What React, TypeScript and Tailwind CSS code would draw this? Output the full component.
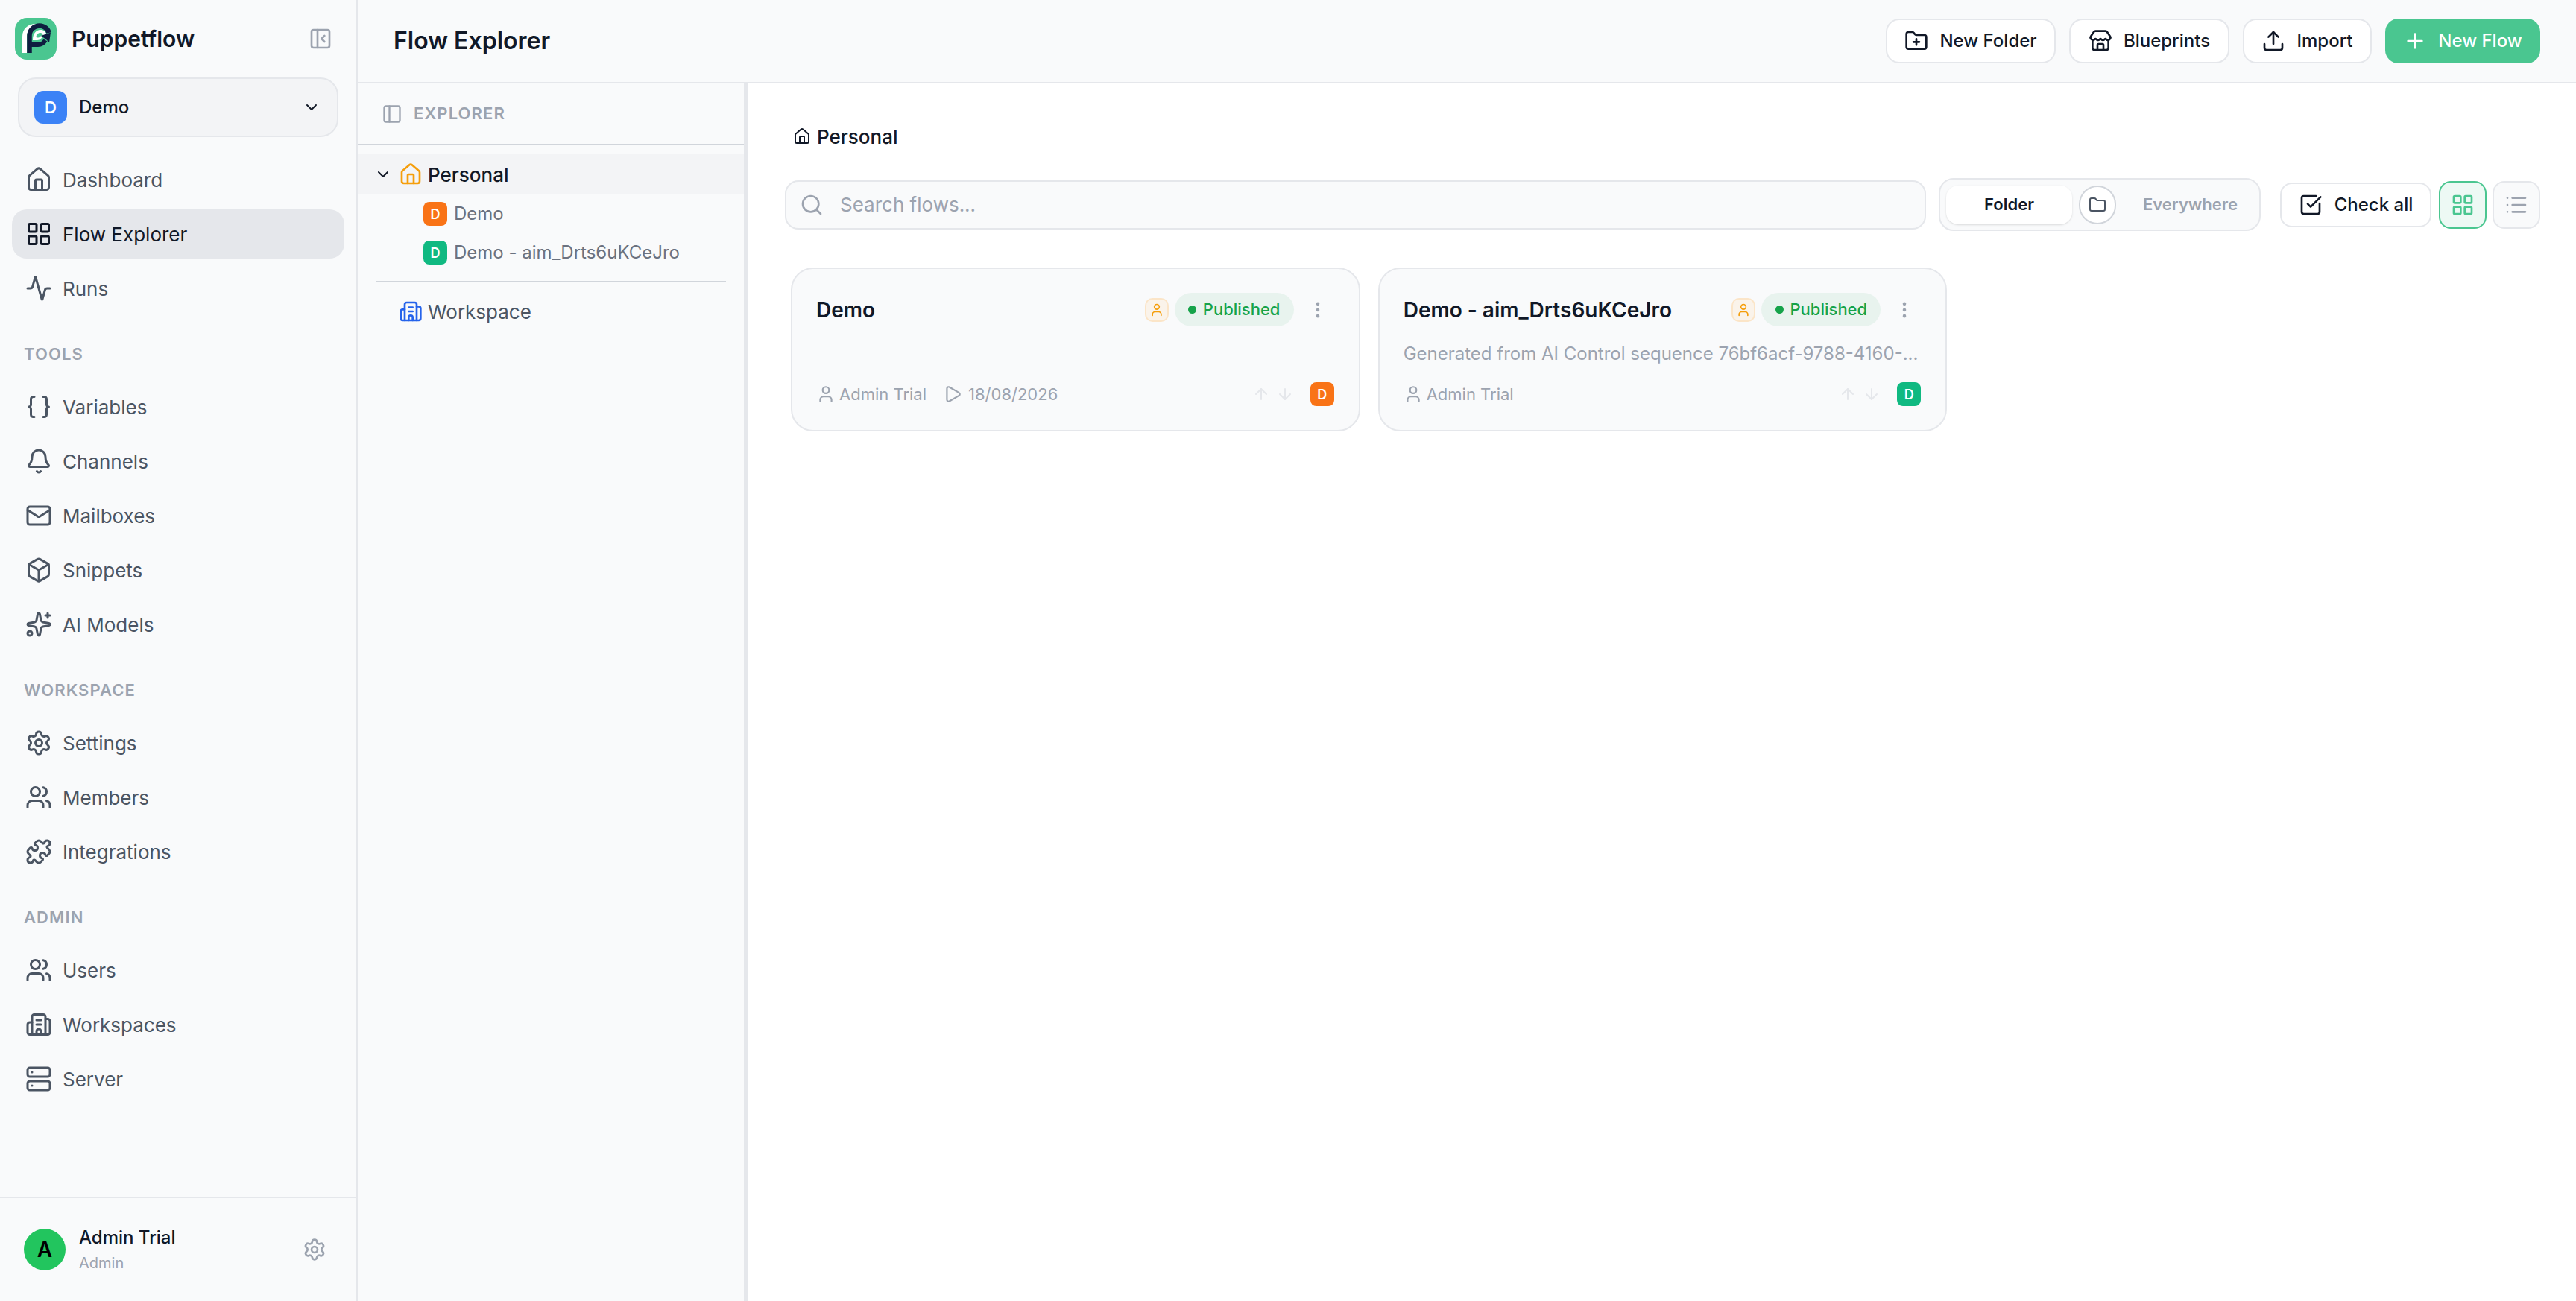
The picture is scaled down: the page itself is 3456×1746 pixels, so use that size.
import {
  Activity, ArrowDown, ArrowUp, Bell, Box, Braces, Building2, ChevronDown, EllipsisVertical, Folder, FolderPlus,
  House, LayoutGrid, List, Mail, PanelLeft, PanelLeftClose, Play, Plus, Puzzle, Search, Server, Settings,
  Sparkles, SquareCheckBig, Store, Upload, User, Users,
} from 'lucide-react';
import type { LucideIcon } from 'lucide-react';

function Logo() {
  return (
    <svg width="56" height="56" viewBox="0 0 56 56" fill="none">
      <rect width="56" height="56" rx="16" fill="#4ac690" />
      <path d="M10 47V25C10 14 18 8 28 8L30 9C22 11 16 16 16 26V47Z" fill="#fff" />
      <path d="M24 29C24 21 29 16 34 16C38 16 41 18 42 21L37 25C36 27 34 30 30 30H24Z" fill="#fff" />
      <path d="M28.500 26C28.500 22.500 31 20 34 20C36 20 37.500 21 38 22L34 25C33.500 26 32 26.500 30 26.500Z" fill="#4ac690" />
      <path d="M19.500 47V24C19.500 16 26 10.500 33 10.500C39.500 10.500 44.500 15 45.500 20" stroke="#0f1d40" strokeWidth="6.500" />
      <path d="M22 36H31C35.500 36 38.500 34 41 30" stroke="#0f1d40" strokeWidth="6" />
      <path d="M35 24L48 19.500L46 33L42 29Z" fill="#0f1d40" />
    </svg>
  );
}

function NavRow({ icon: Icon, label, active }: { icon: LucideIcon; label: string; active?: boolean }) {
  return (
    <div className={active
      ? 'flex h-[66px] items-center gap-[14px] rounded-[20px] bg-[#e5e7eb] pl-[18px] text-[26px] text-[#111827]'
      : 'flex h-[66px] items-center gap-[14px] rounded-[20px] pl-[18px] text-[26px] text-[#4b5563]'}>
      <Icon size={36} strokeWidth={2} />
      <span>{label}</span>
    </div>
  );
}

function NavSection({ title, items }: { title: string; items: { icon: LucideIcon; label: string }[] }) {
  return (
    <div className="mt-[39px]">
      <div className="mb-[22px] flex h-[32px] items-center pl-[16px] text-[22px] font-semibold tracking-[1.1px] text-[#9ca3af]">{title}</div>
      <div className="flex flex-col gap-[7px]">
        {items.map((i) => <NavRow key={i.label} icon={i.icon} label={i.label} />)}
      </div>
    </div>
  );
}

function Sidebar() {
  return (
    <aside className="flex h-full w-[480px] shrink-0 flex-col border-r-2 border-[#e5e7eb] bg-[#f9fafb]">
      <div className="flex h-[104px] items-center pl-[20px] pr-[32px]">
        <Logo />
        <span className="ml-[20px] text-[30px] font-semibold text-[#111827]">Puppetflow</span>
        <PanelLeftClose size={32} className="ml-auto text-[#9ca3af]" />
      </div>
      <div className="mx-[24px] flex h-[80px] w-[430px] items-center rounded-[24px] border-2 border-[#e5e7eb] bg-[#f3f4f6] pl-[20px] pr-[22px]">
        <div className="flex h-[44px] w-[44px] items-center justify-center rounded-[12px] bg-[#3b82f6] text-[22px] font-semibold text-white">D</div>
        <span className="ml-[16px] text-[24px] font-medium text-[#111827]">Demo</span>
        <ChevronDown size={24} className="ml-auto text-[#111827]" />
      </div>
      <div className="flex flex-1 flex-col px-4 pt-[24px]">
        <div className="flex flex-col gap-[7px]">
          <NavRow icon={House} label="Dashboard" />
          <NavRow icon={LayoutGrid} label="Flow Explorer" active />
          <NavRow icon={Activity} label="Runs" />
        </div>
        <NavSection title="TOOLS" items={[
          { icon: Braces, label: 'Variables' },
          { icon: Bell, label: 'Channels' },
          { icon: Mail, label: 'Mailboxes' },
          { icon: Box, label: 'Snippets' },
          { icon: Sparkles, label: 'AI Models' },
        ]} />
        <NavSection title="WORKSPACE" items={[
          { icon: Settings, label: 'Settings' },
          { icon: Users, label: 'Members' },
          { icon: Puzzle, label: 'Integrations' },
        ]} />
        <NavSection title="ADMIN" items={[
          { icon: Users, label: 'Users' },
          { icon: Building2, label: 'Workspaces' },
          { icon: Server, label: 'Server' },
        ]} />
      </div>
      <div className="flex h-[140px] items-center border-t-2 border-[#e5e7eb] pl-[32px] pr-[40px]">
        <div className="flex h-[56px] w-[56px] items-center justify-center rounded-full bg-[#22c55e] text-[28px] font-semibold text-black">A</div>
        <div className="ml-[18px] flex flex-col">
          <span className="text-[24px] leading-[36px] font-medium text-[#111827]">Admin Trial</span>
          <span className="text-[20px] leading-[32px] text-[#9ca3af]">Admin</span>
        </div>
        <Settings size={32} className="ml-auto text-[#9ca3af]" />
      </div>
    </aside>
  );
}

function HeaderButton({ icon: Icon, label, className }: { icon: LucideIcon; label: string; className: string }) {
  return (
    <button className={`flex h-[60px] items-center justify-center gap-[15px] rounded-[18px] border-2 border-[#e5e7eb] bg-white text-[24px] font-medium text-[#111827] ${className}`}>
      <Icon size={32} />
      {label}
    </button>
  );
}

function ExplorerPanel() {
  return (
    <div className="flex h-full w-[524px] shrink-0 flex-col border-r-[6px] border-[#e5e7eb] bg-[#f9fafb]">
      <div className="flex h-[83px] items-center gap-[15px] border-b-2 border-[#d1d5db] pl-[32px] text-[22px] font-semibold tracking-[1.1px] text-[#9ca3af]">
        <PanelLeft size={28} />
        EXPLORER
      </div>
      <div className="mt-[12px] flex h-[54px] items-center bg-[#f3f4f6] pl-[22px] text-[26px] font-medium text-[#111827]">
        <ChevronDown size={24} />
        <House size={32} className="ml-[9px] text-[#f59e0b]" />
        <span className="ml-[7px]">Personal</span>
      </div>
      <div className="mt-[10px] flex h-[32px] items-center pl-[88px] text-[24px] text-[#6b7280]">
        <div className="flex h-[32px] w-[32px] items-center justify-center rounded-[8px] bg-[#f97316] text-[18px] font-semibold text-white">D</div>
        <span className="ml-[9px]">Demo</span>
      </div>
      <div className="mt-[20px] flex h-[32px] items-center pl-[88px] text-[24px] text-[#6b7280]">
        <div className="flex h-[32px] w-[32px] items-center justify-center rounded-[8px] bg-[#10b981] text-[18px] font-semibold text-white">D</div>
        <span className="ml-[9px]">Demo - aim_Drts6uKCeJro</span>
      </div>
      <div className="mx-[24px] mt-[22px] h-[2px] bg-[#d1d5db]" />
      <div className="mt-[21px] flex h-[36px] items-center pl-[55px] text-[26px] text-[#4b5563]">
        <Building2 size={32} className="text-[#2563eb]" />
        <span className="ml-[7px]">Workspace</span>
      </div>
    </div>
  );
}

function FlowCard({ title, desc, date, tile }: { title: string; desc?: string; date?: string; tile: string }) {
  return (
    <div className="flex h-[220px] flex-col rounded-[30px] border-2 border-[#e5e7eb] bg-[#f9fafb] pl-[32px] pr-[33px]">
      <div className="mt-[32px] flex h-[45px] items-center">
        <span className="text-[28px] font-semibold text-[#111827]">{title}</span>
        <div className="ml-auto flex h-[32px] w-[32px] items-center justify-center rounded-[10px] border-2 border-[#fbe5c8] bg-[#faf3ea]">
          <User size={20} className="text-[#f59e0b]" />
        </div>
        <div className="ml-[8px] flex h-[45px] w-[160px] items-center justify-center gap-[9px] rounded-full bg-[#e8f3ee] text-[22px] font-medium text-[#16a34a]">
          <span className="h-[11px] w-[11px] rounded-full bg-[#16a34a]" />
          Published
        </div>
        <EllipsisVertical size={28} className="ml-[18px] mr-[8px] text-[#9ca3af]" />
      </div>
      <div className="mt-[20px] h-[34px] whitespace-nowrap text-[24px] leading-[34px] text-[#9ca3af]">{desc}</div>
      <div className="mt-[21px] flex h-[32px] items-center text-[22px] text-[#9ca3af]">
        <User size={26} />
        <span className="ml-[5px]">Admin Trial</span>
        {date && <Play size={26} className="ml-[22px]" />}
        {date && <span className="ml-[8px]">{date}</span>}
        <ArrowUp size={24} className="ml-auto text-[#e5e7eb]" />
        <ArrowDown size={24} className="ml-[8px] text-[#e5e7eb]" />
        <div className={`ml-[22px] flex h-[32px] w-[32px] items-center justify-center rounded-[8px] text-[18px] font-semibold text-white ${tile}`}>D</div>
      </div>
    </div>
  );
}

export default function App() {
  return (
    <div className="flex h-[1746px] w-[3456px] overflow-hidden bg-white font-[Inter,sans-serif]">
      <Sidebar />
      <div className="flex min-w-0 flex-1 flex-col">
        <header className="flex h-[112px] shrink-0 items-center border-b-2 border-[#e5e7eb] bg-[#f9fafb] pl-[48px] pr-[48px]">
          <h1 className="text-[32px] font-semibold text-[#111827]">Flow Explorer</h1>
          <div className="ml-auto flex items-center gap-[18px]">
            <HeaderButton icon={FolderPlus} label="New Folder" className="w-[228px]" />
            <HeaderButton icon={Store} label="Blueprints" className="w-[215px]" />
            <HeaderButton icon={Upload} label="Import" className="w-[173px]" />
            <button className="flex h-[60px] w-[208px] items-center justify-center gap-[15px] rounded-[18px] bg-[#4ac690] text-[24px] font-medium text-white">
              <Plus size={32} />
              New Flow
            </button>
          </div>
        </header>
        <div className="flex min-h-0 flex-1">
          <ExplorerPanel />
          <main className="min-w-0 flex-1 bg-white pl-[49px] pr-[48px] pt-[51px]">
            <div className="flex h-[40px] items-center gap-[8px] pl-[11px] text-[26px] font-medium text-[#111827]">
              <House size={24} />
              Personal
            </div>
            <div className="mt-[36px] flex h-[71px] items-center">
              <div className="flex h-[66px] flex-1 items-center gap-[22px] rounded-[18px] border-2 border-[#e5e7eb] bg-[#f9fafb] pl-[18px] text-[26px] text-[#9ca3af]">
                <Search size={32} />
                <span>Search flows...</span>
              </div>
              <div className="ml-[17px] flex h-[71px] w-[432px] items-center rounded-[20px] border-2 border-[#e5e7eb] bg-[#f9fafb] pl-[8px] text-[22px] font-semibold">
                <div className="flex h-[52px] w-[169px] items-center justify-center rounded-[16px] bg-white text-[#111827] shadow-sm">Folder</div>
                <div className="ml-[9px] flex h-[52px] w-[50px] items-center justify-center rounded-full border-2 border-[#d1d5db] bg-white text-[#4b5563]">
                  <Folder size={24} />
                </div>
                <span className="ml-[36px] text-[#9ca3af]">Everywhere</span>
              </div>
              <button className="ml-[26px] flex h-[60px] w-[203px] items-center justify-center gap-[16px] rounded-[16px] border-2 border-[#e5e7eb] bg-white text-[24px] font-medium text-[#111827]">
                <SquareCheckBig size={32} />
                Check all
              </button>
              <button className="ml-[10px] flex h-[64px] w-[64px] items-center justify-center rounded-[16px] border-2 border-[#4ac690] bg-[#edf9f4] text-[#4ac690]">
                <LayoutGrid size={32} />
              </button>
              <button className="ml-[8px] flex h-[64px] w-[64px] items-center justify-center rounded-[16px] border-2 border-[#e5e7eb] bg-[#f9fafb] text-[#9ca3af]">
                <List size={32} />
              </button>
            </div>
            <div className="mt-[49px] grid grid-cols-3 gap-[24px] px-[8px]">
              <FlowCard title="Demo" date="18/08/2026" tile="bg-[#f97316]" />
              <FlowCard title="Demo - aim_Drts6uKCeJro" desc="Generated from AI Control sequence 76bf6acf-9788-4160-..." tile="bg-[#10b981]" />
            </div>
          </main>
        </div>
      </div>
    </div>
  );
}
